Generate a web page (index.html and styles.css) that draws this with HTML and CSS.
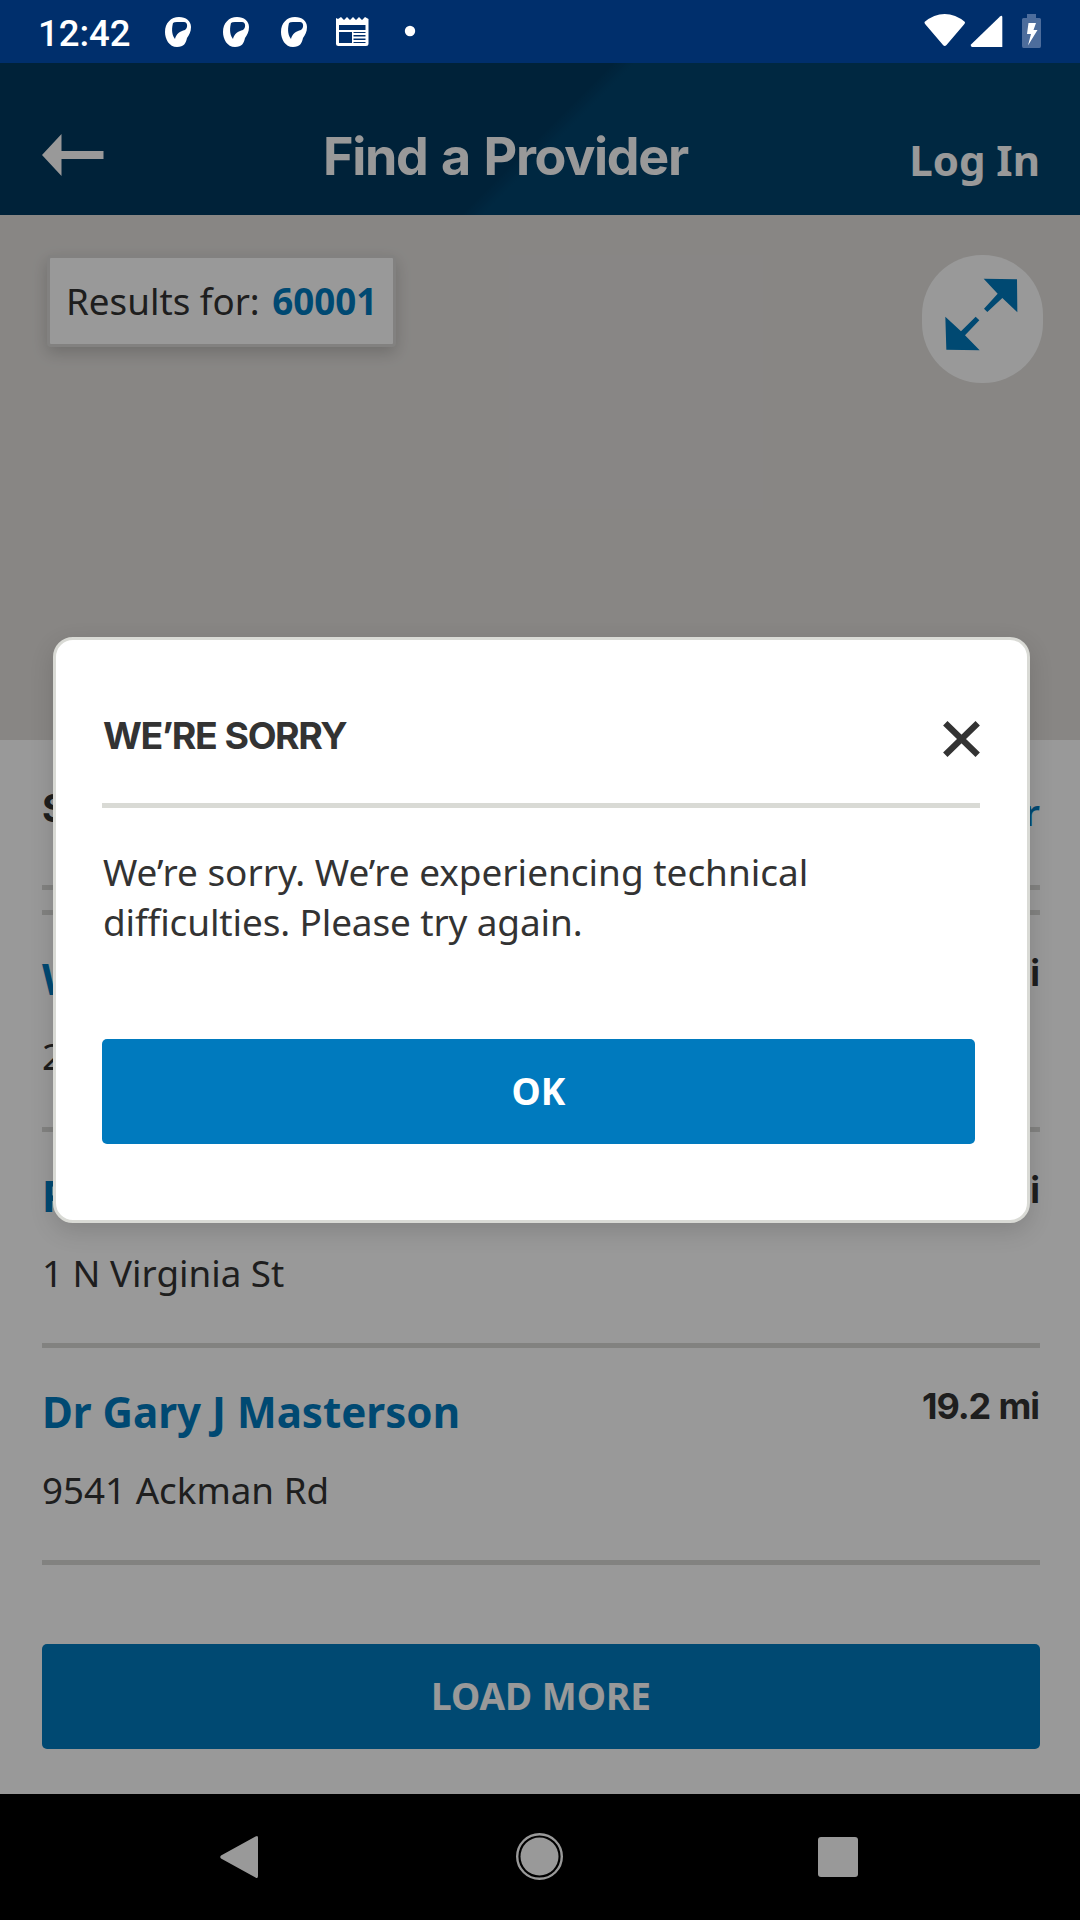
FILE: index.html
```html
<!DOCTYPE html>
<html lang="en">
<head>
<meta charset="utf-8">
<title>Find a Provider</title>
<link rel="stylesheet" href="styles.css">
</head>
<body>
<div class="screen">
  <div class="status">
    <span class="clock">12:42</span>
    <svg class="status-left" width="262" height="63" viewBox="160 0 262 63" fill="#fff">
      <defs>
        <path id="note" fill-rule="evenodd" d="M179 17C186 17 191 21 191 27C191 32 189 35 187 38C186 43 184 47 177 47C169 47 165 39 165 32C165 23 171 17 179 17ZM173 23C172 27 171 34 175 39C176 34 180 31 185 30C188 28 188 22 184 22H177Q174 22 173 23Z"/>
      </defs>
      <use href="#note"/>
      <use href="#note" x="58"/>
      <use href="#note" x="116"/>
      <path fill-rule="evenodd" d="M336 18L338 19L341 17L344 20L347 17L350 20L353 17L356 20L359 17L362 20L365 17L368.500 19V43.500Q368.500 46 366 46H338.500Q336 46 336 43.500ZM339 25V30H365.500V25ZM339 32V43H352V32ZM353.500 32V33H365.500V32ZM353.500 35V36.500H365.500V35ZM353.500 38.500V40H365.500V38.500ZM353.500 42V43H365.500V42Z"/>
      <circle cx="410" cy="31" r="5.200"/>
    </svg>
    <svg class="status-right" width="120" height="63" viewBox="922 0 120 63" fill="#fff">
      <path d="M924.500 22Q934 14 944.700 14T965 22Q965 23.500 964 24.500L946.500 45Q944.700 47 943 45L925.500 24.500Q924.300 23 924.500 22Z"/>
      <path d="M1000 16.500Q1002 15 1002.300 17V47H972Q970 46 971 44.500Z"/>
      <path fill="#4d6d9c" d="M1027 14H1036V18H1039.500Q1041 18 1041 19.500V46Q1041 48 1039.500 48H1023.500Q1022 48 1022 46V19.500Q1022 18 1023.500 18H1027Z"/>
      <path d="M1028.500 23H1036L1033.500 30H1037.500L1028 45.500L1031 34H1027Z"/>
    </svg>
  </div>

  <header class="header">
    <svg class="back" width="62" height="42" viewBox="0 0 62 42" fill="#fff"><path d="M0 21L19.500 0V17H61.500V25H19.500V42Z"/></svg>
    <h1 class="title">Find a Provider</h1>
    <a class="login">Log In</a>
  </header>

  <section class="map">
    <div class="results">Results for: <b class="zip">60001</b></div>
    <div class="expand">
      <svg width="74" height="74" viewBox="195 174 222 222" fill="#007abe"><path d="M311 176L411 178L412 277L367 234L322 276L312 266L353 221ZM196 290L243 334L287 290L298 301L255 346L299 391L199 389Z"/></svg>
    </div>
  </section>

  <main class="list">
    <div class="list-head"><span class="list-title">S</span><a class="filter">r</a></div>
    <div class="rule"></div>
    <article class="row"><h2 class="name">W</h2><span class="distance">i</span><p class="address">2</p></article>
    <article class="row"><h2 class="name">P</h2><span class="distance">i</span><p class="address">1 N Virginia St</p></article>
    <article class="row"><h2 class="name">Dr Gary J Masterson</h2><span class="distance">19.2 mi</span><p class="address">9541 Ackman Rd</p></article>
    <button class="button more">LOAD MORE</button>
  </main>

  <nav class="nav">
    <svg width="39" height="44" viewBox="0 0 39 44" fill="#fff"><path d="M1 20.500L35.500 1.500Q38 0 38 2.500V41Q38 44 35.500 42.500L1 23.500Q-.5 22 1 20.500Z"/></svg>
    <svg width="48" height="48" viewBox="0 0 48 48"><circle cx="24.500" cy="23.500" r="22.300" fill="none" stroke="#fff" stroke-width="2.400"/><circle cx="24.500" cy="23.500" r="19" fill="#fff"/></svg>
    <svg width="40" height="40" viewBox="0 0 40 40"><rect width="40" height="40" rx="3" fill="#fff"/></svg>
  </nav>

  <div class="scrim">
    <div class="dialog">
      <div class="dialog-head">
        <h2 class="dialog-title">WE’RE SORRY</h2>
        <svg class="close" width="37" height="36" viewBox="0 0 37 36"><path d="M2.300 2.300L34.700 33.700M34.700 2.300L2.300 33.700" stroke="#333" stroke-width="6.300"/></svg>
      </div>
      <p class="message">We’re sorry. We’re experiencing technical<br><span class="message-end">difficulties. Please try again.</span></p>
      <button class="button ok">OK</button>
    </div>
  </div>
</div>
</body>
</html>
```
FILE: styles.css
```css
* { box-sizing: border-box; margin: 0; padding: 0; }
body { background: #000; }
.screen {
  position: relative;
  display: flex;
  flex-direction: column;
  width: 1080px;
  height: 1920px;
  overflow: hidden;
  background: #fff;
  color: #333;
  font: 36.75px/50px "Noto Sans", sans-serif;
}
svg { display: block; flex: none; }

.status {
  display: flex;
  height: 63px;
  padding: 0 38px;
  background: #002f6c;
  color: #fff;
}
.clock {
  width: 122px;
  font: 500 36.5px/67px Roboto, sans-serif;
}
.status-right { margin-left: auto; }

.header {
  display: grid;
  grid-template-columns: 281px 1fr 285px;
  align-items: start;
  height: 152px;
  padding: 0 40px 0 42px;
  background: linear-gradient(135deg, #00395f 0 calc(50% - 8px), #00436d calc(50% + 8px));
  background-size: 1094px 152px;
  color: #fff;
}
.back { margin-top: 71px; }
.title {
  margin-top: 64px;
  font: 700 52px/60px Inter, sans-serif;
  letter-spacing: -1.3px;
  word-spacing: 2.5px;
  white-space: nowrap;
}
.login {
  margin-top: 67px;
  font-size: 42px;
  font-weight: 700;
  line-height: 60px;
  text-align: right;
}

.map {
  display: flex;
  justify-content: space-between;
  align-items: flex-start;
  height: 525px;
  padding: 40px 37px 0 47px;
  background: #e3e0dd;
}
.results {
  width: 349px;
  height: 92px;
  padding: 18px 0 0 16px;
  border: 3px solid #d9d8d5;
  border-radius: 4px;
  background: #fff;
  box-shadow: 0 6px 16px rgba(0, 0, 0, .18);
  white-space: nowrap;
}
.zip { color: #007abe; margin-left: 3px; }
.expand {
  display: flex;
  justify-content: center;
  align-items: center;
  width: 121px;
  height: 128px;
  padding: 0 2px 8px 0;
  border-radius: 60px;
  background: #fff;
}

.list {
  display: flex;
  flex-direction: column;
  flex: 1;
  padding: 0 40px 0 42px;
}
.list-head {
  display: flex;
  justify-content: space-between;
  height: 150px;
  padding-top: 43px;
  border-bottom: 5px solid #d9d9d6;
}
.list-title { font: 700 38px/50px Inter, sans-serif; }
.filter { margin-top: 4px; color: #007abe; font-weight: 600; }
.rule { height: 25px; border-bottom: 5px solid #d9d9d6; }
.row {
  display: grid;
  grid-template-columns: 1fr auto;
  align-content: start;
  align-items: start;
  height: 216.6px;
  padding-top: 33px;
  border-bottom: 5px solid #d9d9d6;
}
.name {
  margin: 1px 0 22.4px;
  color: #007abe;
  font-size: 42.1px;
  line-height: 60px;
}
.distance {
  margin-right: 1px;
  font: 700 36px/50px Inter, sans-serif;
  letter-spacing: -1.1px;
  word-spacing: 1px;
}

.button {
  border: 0;
  border-radius: 5px;
  background: #007abe;
  color: #fff;
  font: 700 37px/103px "Noto Sans", sans-serif;
  text-align: center;
}
.more { height: 105px; margin-top: 79.2px; padding-bottom: 2px; }

.nav {
  display: flex;
  align-items: center;
  justify-content: space-between;
  height: 126px;
  padding: 0 222px 0 220px;
  background: #000;
}

.scrim {
  position: absolute;
  inset: 63px 0 0;
  padding: 574px 50px 0 53px;
  background: rgba(0, 0, 0, .4);
}
.dialog {
  display: flex;
  flex-direction: column;
  height: 586px;
  padding: 0 47px 0 46px;
  border: 3px solid #d9dad5;
  border-radius: 20px;
  background: #fff;
  box-shadow: 0 8px 24px rgba(0, 0, 0, .14);
}
.dialog-head {
  display: flex;
  justify-content: space-between;
  height: 168px;
  padding-top: 71px;
  border-bottom: 5px solid #d9dad5;
}
.dialog-title {
  margin-left: 1px;
  font: 700 37.5px/50px Inter, sans-serif;
  letter-spacing: -1.5px;
  word-spacing: 1px;
}
.close { margin-top: 10px; }
.message { margin: 39px 0 92px 1px; font-size: 36.95px; }
.message-end { letter-spacing: -.12px; }
.ok { height: 105px; margin-right: 5px; padding-bottom: 2px; }
```
